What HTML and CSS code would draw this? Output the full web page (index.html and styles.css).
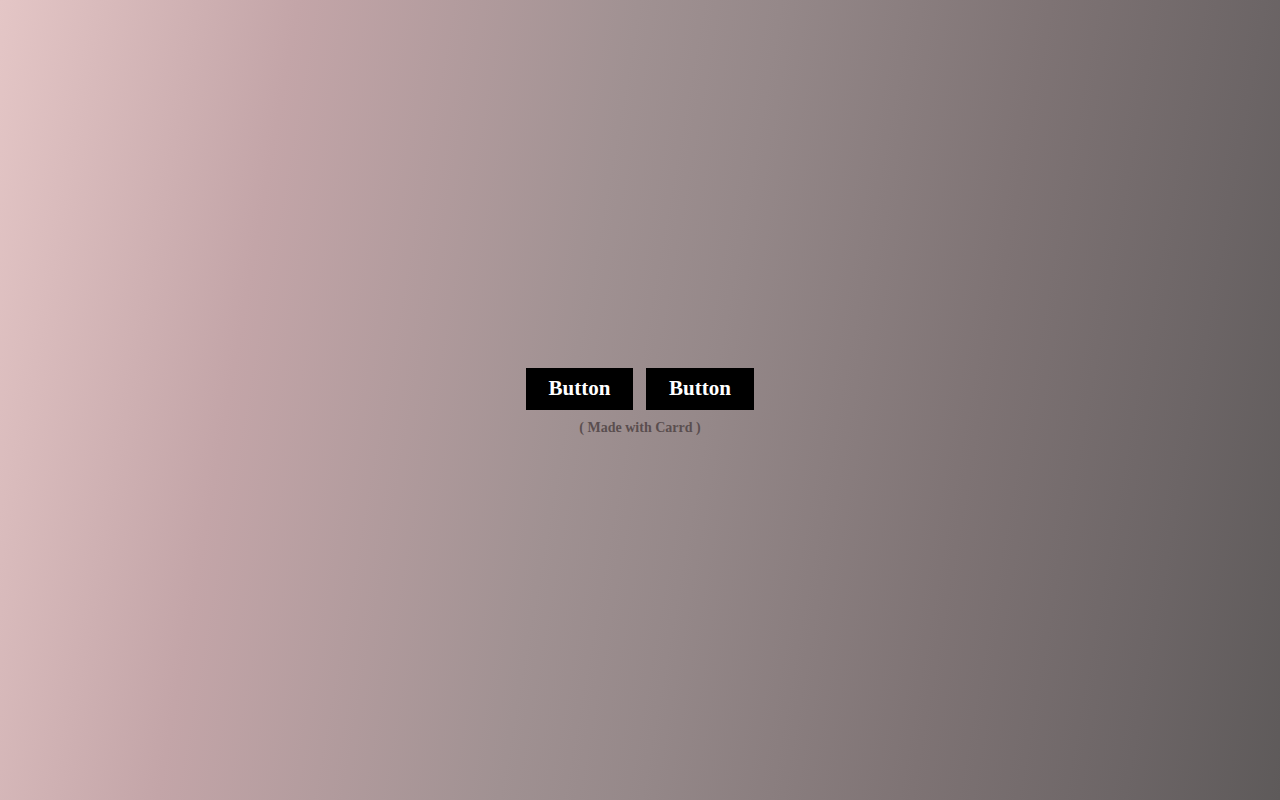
FILE: index.html
```html
<!DOCTYPE html>
<html>
<head>
<meta charset="utf-8">
<link rel="stylesheet" href="styles.css">
</head>
<body>
<main class="page">
  <div class="content">
    <div class="buttons">
      <a class="btn" href="#">Button</a>
      <a class="btn" href="#">Button</a>
    </div>
    <p class="credit">( Made with Carrd )</p>
  </div>
</main>
</body>
</html>
```

FILE: styles.css
```css
html, body {
  margin: 0;
  padding: 0;
  height: 100%;
}
body {
  background: linear-gradient(100deg, #e4c6c6 0%, #c3a5a8 21%, #a09192 45%, #958889 55%, #7e7374 74%, #6c6566 89%, #5e5a5a 100%);
  font-family: "Liberation Serif", "DejaVu Serif", serif;
}
.page {
  height: 800px;
  display: flex;
  align-items: center;
  justify-content: center;
}
.content {
  display: flex;
  flex-direction: column;
  align-items: center;
  margin-top: 4px;
}
.buttons {
  display: flex;
  gap: 13px;
}
.btn {
  display: flex;
  align-items: center;
  justify-content: center;
  width: 107px;
  height: 42px;
  background: #000;
  color: #fff;
  text-decoration: none;
  font-weight: bold;
  font-size: 21px;
  padding-bottom: 1px;
  box-sizing: border-box;
}
.btn + .btn {
  width: 108px;
}
.credit {
  margin: 10px 0 0;
  font-size: 14px;
  font-weight: bold;
  color: #5a4e4f;
}
```
